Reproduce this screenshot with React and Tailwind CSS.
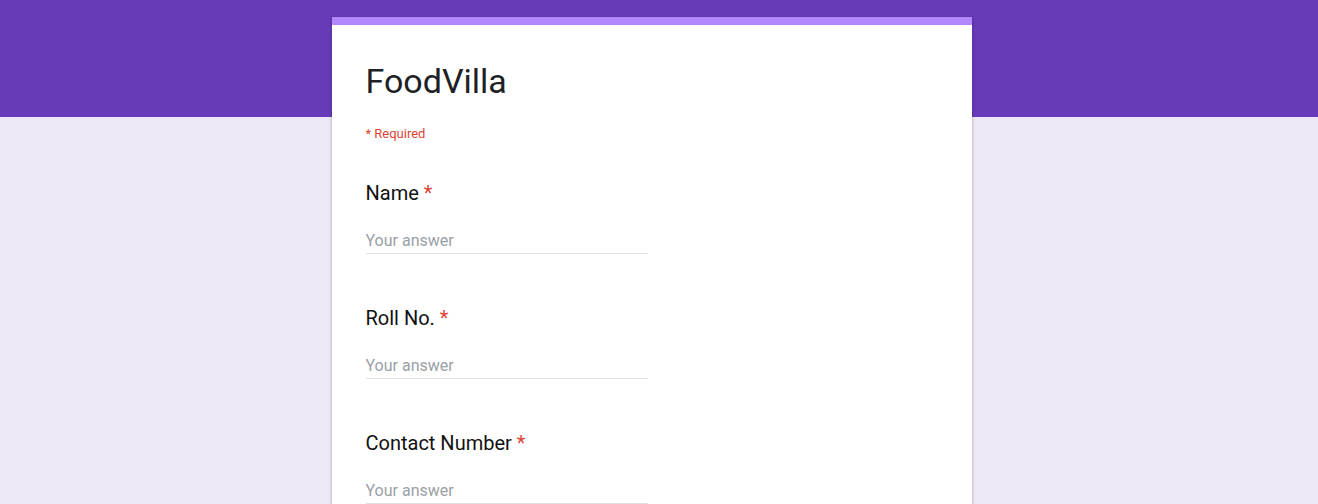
import { useState } from "react";

const questions = ["Name", "Roll No.", "Contact Number"];

function Question({ label }) {
  const [value, setValue] = useState("");
  return (
    <div className="pt-[37px] pb-[13px]">
      <div className="text-[20px] leading-[28px] text-[#111111]">
        {label} <span className="text-[#db4437]">*</span>
      </div>
      <input
        className="mt-[21px] block h-[26px] w-[282px] border-b border-[#e0e0e0] pb-[1px] text-[16px] leading-[24px] text-[#202124] outline-none placeholder:text-[#9aa0a6]"
        placeholder="Your answer"
        value={value}
        onChange={(e) => setValue(e.target.value)}
      />
    </div>
  );
}

export default function App() {
  return (
    <div className="relative min-h-[504px] bg-[#ede7f6] font-['Roboto',sans-serif]">
      <div className="absolute inset-x-0 top-0 h-[117px] bg-[#673ab7]" />
      <div className="relative pr-[15px]">
        <div className="mx-auto w-[640px] pt-[17px]">
          <div className="overflow-hidden bg-white shadow-[0_1px_3px_rgba(0,0,0,0.3)]">
            <div className="h-[8px] bg-[#b388ff]" />
            <div className="px-[34px] pt-[36px] pb-[40px]">
              <h1 className="text-[34px] leading-[40px] font-normal text-[#202124]">FoodVilla</h1>
              <p className="mt-[25px] text-[13px] leading-[16px] text-[#db4437]">* Required</p>
              {questions.map((q) => (
                <Question key={q} label={q} />
              ))}
            </div>
          </div>
        </div>
      </div>
    </div>
  );
}
